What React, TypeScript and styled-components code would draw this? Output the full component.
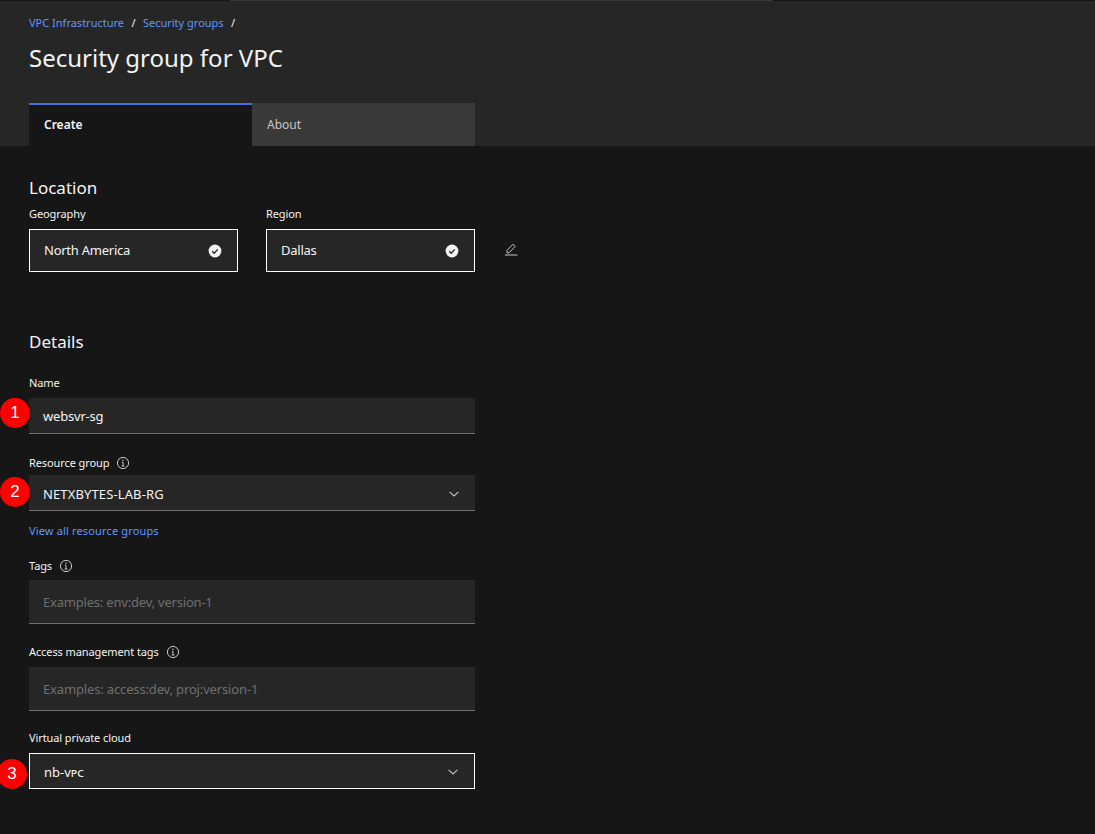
import { FC, ReactNode } from "react";
import styled, { createGlobalStyle } from "styled-components";

const GlobalStyle = createGlobalStyle`
  html, body {
    margin: 0;
    padding: 0;
    background: #161616;
  }
  body {
    font-family: "Noto Sans", "Open Sans", sans-serif;
    color: #f4f4f4;
  }
  * {
    box-sizing: border-box;
  }
`;

const Page = styled.div`
  width: 1095px;
  height: 834px;
  overflow: hidden;
  background: #161616;
`;

const Header = styled.header`
  height: 146px;
  padding: 16px 29px 0;
  background: #262626;
  display: flex;
  flex-direction: column;
`;

const TopStrip = styled.div`
  height: 1px;
  margin: -16px -29px 15px;
  background: linear-gradient(
    to right,
    #161616 0,
    #161616 230px,
    #393939 230px,
    #393939 773px,
    #161616 773px
  );
`;

const Breadcrumb = styled.nav`
  display: flex;
  align-items: center;
  gap: 7.4px;
  height: 14px;
  font-size: 11px;
  line-height: 14px;
  color: #f4f4f4;
`;

const Link = styled.a`
  color: #5f96ff;
  font-size: 11px;
  line-height: 16px;
`;

const Title = styled.h1`
  margin: 12px 0 0;
  height: 32px;
  font-size: 24px;
  line-height: 32px;
  font-weight: 400;
  color: #f4f4f4;
`;

const TabRow = styled.div`
  display: flex;
  margin-top: auto;
  width: 446px;
`;

const Tab = styled.div<{ $active?: boolean }>`
  flex: 1;
  height: 43px;
  padding: 0 15px 2px;
  display: flex;
  align-items: center;
  font-size: 12px;
  font-weight: ${(p) => (p.$active ? 600 : 400)};
  color: ${(p) => (p.$active ? "#f4f4f4" : "#c6c6c6")};
  background: ${(p) => (p.$active ? "#161616" : "#393939")};
  border-top: 2px solid ${(p) => (p.$active ? "#4170dc" : "#393939")};
`;

const Main = styled.main`
  padding: 30px 0 0 29px;
  width: 475px;
  display: flex;
  flex-direction: column;
`;

const SectionTitle = styled.h2`
  margin: 0;
  height: 24px;
  font-size: 17px;
  line-height: 24px;
  font-weight: 400;
  color: #f4f4f4;
`;

const LocationRow = styled.div`
  display: flex;
  align-items: flex-end;
  gap: 28px;
  margin-top: 6px;
  width: 446px;
  position: relative;
`;

const LocationCol = styled.div`
  width: 209px;
  display: flex;
  flex-direction: column;
`;

const Label = styled.label`
  display: flex;
  align-items: center;
  gap: 7px;
  height: 16px;
  font-size: 11px;
  line-height: 16px;
  letter-spacing: -0.1px;
  color: #f4f4f4;
`;

const ReadOnlyBox = styled.div`
  margin-top: 7px;
  height: 43px;
  padding: 0 15px 2px 14px;
  display: flex;
  align-items: center;
  justify-content: space-between;
  font-size: 13px;
  letter-spacing: -0.25px;
  color: #f4f4f4;
  background: #262626;
  border: 1px solid #ffffff;
`;

const CheckSvg = styled.svg`
  margin-top: 2px;
`;

const EditButton = styled.button`
  position: absolute;
  left: 474px;
  bottom: 15px;
  width: 16px;
  height: 16px;
  padding: 0;
  border: 0;
  background: none;
  color: #c6c6c6;
  display: flex;
`;

const DetailsTitle = styled(SectionTitle)`
  margin-top: 58px;
`;

const Field = styled.div<{ $top: number }>`
  margin-top: ${(p) => p.$top}px;
  display: flex;
  flex-direction: column;
`;

const Control = styled.div<{
  $height: number;
  $gap: number;
  $outlined?: boolean;
  $drop?: number;
  $tracking?: number;
}>`
  position: relative;
  margin-top: ${(p) => p.$gap}px;
  height: ${(p) => p.$height}px;
  padding: ${(p) => p.$drop ?? 0}px 14px 0;
  display: flex;
  align-items: center;
  justify-content: space-between;
  font-size: 13px;
  letter-spacing: ${(p) => p.$tracking ?? 0}px;
  color: #f4f4f4;
  background: #262626;
  border-bottom: 1px solid #6f6f6f;
  ${(p) => (p.$outlined ? "border: 1px solid #ffffff;" : "")}
`;

const Placeholder = styled.span`
  color: #6f6f6f;
`;

const SmallCaps = styled.span`
  font-variant: small-caps;
`;

const ResourceLink = styled(Link)`
  margin-top: 12px;
  display: block;
  height: 16px;
  letter-spacing: 0.15px;
`;

const StepBadge = styled.span<{ $left: number; $top: number }>`
  position: absolute;
  left: ${(p) => p.$left}px;
  top: ${(p) => p.$top}px;
  width: 30px;
  height: 30px;
  border-radius: 50%;
  background: #fe0000;
  color: #ffffff;
  font-family: "Liberation Sans", sans-serif;
  font-size: 17px;
  letter-spacing: 0;
  display: flex;
  align-items: center;
  justify-content: center;
`;

const ChevronSvg = styled.svg`
  margin-right: 2px;
`;

const InfoIcon: FC = () => (
  <svg width="14" height="14" viewBox="0 0 14 14" fill="none" stroke="#c6c6c6" strokeWidth="1">
    <circle cx="7" cy="7" r="5.6" />
    <path d="M5.6 10h2.8M7 10V6.2H5.9" />
    <circle cx="6.9" cy="4.2" r="0.7" fill="#c6c6c6" stroke="none" />
  </svg>
);

const CheckIcon: FC = () => (
  <CheckSvg width="14" height="14" viewBox="0 0 14 14">
    <circle cx="7" cy="7" r="6.4" fill="#f4f4f4" />
    <path d="M4.2 7.2l2 2 3.6-3.8" fill="none" stroke="#262626" strokeWidth="1.3" />
  </CheckSvg>
);

const Chevron: FC = () => (
  <ChevronSvg width="10" height="10" viewBox="0 0 10 10" fill="none" stroke="#c6c6c6" strokeWidth="1.1">
    <path d="M0.6 2.8L5 7l4.4-4.2" />
  </ChevronSvg>
);

const PencilIcon: FC = () => (
  <svg width="16" height="16" viewBox="0 0 16 16" fill="none" stroke="#c6c6c6" strokeWidth="1">
    <path d="M2 14h12.5" />
    <path d="M4 11.8V9.4l6-6.2 2.2 2.2-6 6.4z" />
  </svg>
);

const FieldLabel: FC<{ info?: boolean; children: ReactNode }> = ({ info, children }) => (
  <Label>
    {children}
    {info && <InfoIcon />}
  </Label>
);

export default function App() {
  return (
    <>
      <GlobalStyle />
      <Page>
        <Header>
          <TopStrip />
          <Breadcrumb>
            <Link>VPC Infrastructure</Link>
            <span>/</span>
            <Link>Security groups</Link>
            <span>/</span>
          </Breadcrumb>
          <Title>Security group for VPC</Title>
          <TabRow>
            <Tab $active>Create</Tab>
            <Tab>About</Tab>
          </TabRow>
        </Header>
        <Main>
          <SectionTitle>Location</SectionTitle>
          <LocationRow>
            <LocationCol>
              <Label>Geography</Label>
              <ReadOnlyBox>
                North America
                <CheckIcon />
              </ReadOnlyBox>
            </LocationCol>
            <LocationCol>
              <Label>Region</Label>
              <ReadOnlyBox>
                Dallas
                <CheckIcon />
              </ReadOnlyBox>
            </LocationCol>
            <EditButton>
              <PencilIcon />
            </EditButton>
          </LocationRow>
          <DetailsTitle>Details</DetailsTitle>
          <Field $top={21}>
            <FieldLabel>Name</FieldLabel>
            <Control $height={36} $gap={7} $tracking={-0.2}>
              websvr-sg
              <StepBadge $left={-29} $top={0}>1</StepBadge>
            </Control>
          </Field>
          <Field $top={21}>
            <FieldLabel info>Resource group</FieldLabel>
            <Control $height={36} $gap={4} $drop={2} $tracking={0.12}>
              NETXBYTES-LAB-RG
              <Chevron />
              <StepBadge $left={-29} $top={2}>2</StepBadge>
            </Control>
          </Field>
          <ResourceLink>View all resource groups</ResourceLink>
          <Field $top={19}>
            <FieldLabel info>Tags</FieldLabel>
            <Control $height={44} $gap={6} $tracking={-0.2}>
              <Placeholder>Examples: env:dev, version-1</Placeholder>
            </Control>
          </Field>
          <Field $top={20}>
            <FieldLabel info>Access management tags</FieldLabel>
            <Control $height={44} $gap={7} $tracking={-0.15}>
              <Placeholder>Examples: access:dev, proj:version-1</Placeholder>
            </Control>
          </Field>
          <Field $top={19}>
            <FieldLabel>Virtual private cloud</FieldLabel>
            <Control $height={36} $gap={7} $outlined $drop={1}>
              <span>
                nb-<SmallCaps>vpc</SmallCaps>
              </span>
              <Chevron />
              <StepBadge $left={-33} $top={5}>3</StepBadge>
            </Control>
          </Field>
        </Main>
      </Page>
    </>
  );
}
